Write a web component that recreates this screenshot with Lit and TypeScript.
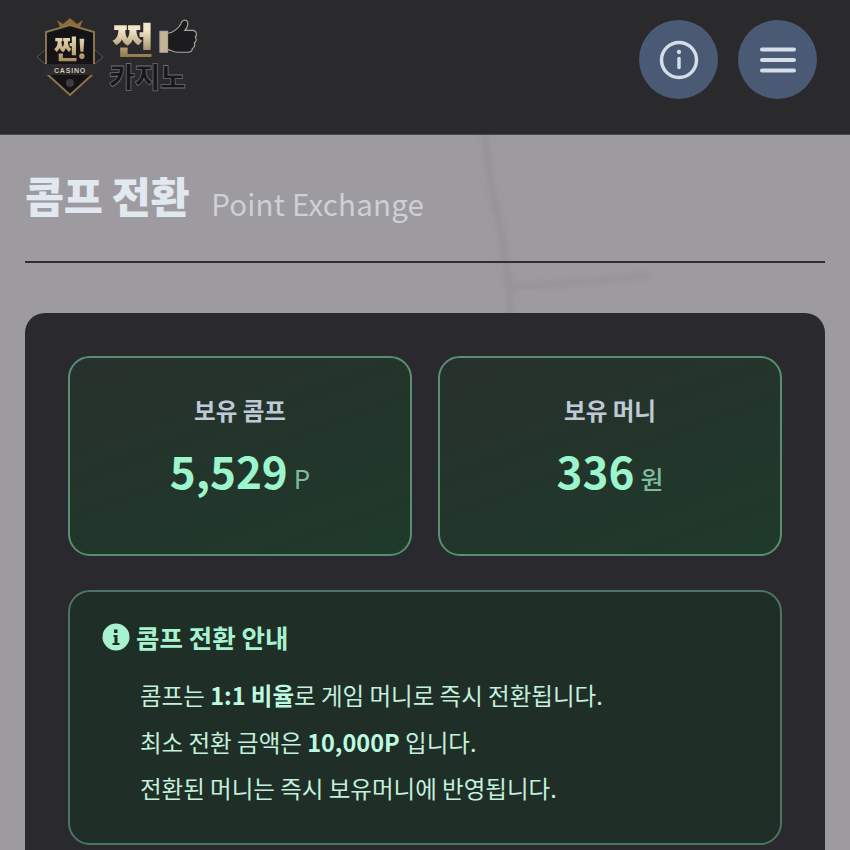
import { LitElement, html, css } from "lit";
import { customElement } from "lit/decorators.js";

@customElement("app-root")
export class AppRoot extends LitElement {
  static styles = css`
    :host { display: block; width: 850px; height: 850px; overflow: hidden; background: #9d9b9f; font-family: "Noto Sans CJK KR", "Noto Sans", sans-serif; }
    .header { height: 135px; box-sizing: border-box; background: #2a292b; border-bottom: 1px solid #4a494c; display: flex; justify-content: space-between; align-items: flex-start; padding: 20px 33px 0 36px; }
    .logo { display: flex; gap: 5px; margin-top: -3px; }
    .shield { position: relative; width: 68px; height: 80px; flex: none; }
    .shield svg { position: absolute; inset: 0; }
    .shield-t { position: absolute; left: 0; top: 16px; width: 68px; text-align: center; font-size: 26px; font-weight: 900; line-height: 30px; letter-spacing: -1px; background: linear-gradient(#f2e4c4, #a38658); -webkit-background-clip: text; background-clip: text; color: transparent; }
    .shield-c { position: absolute; left: 0; top: 50px; width: 68px; text-align: center; font: 700 7px/8px "Liberation Sans", sans-serif; letter-spacing: .8px; color: #cfc7b8; }
    .word { position: relative; width: 92px; height: 72px; margin-top: 3px; }
    .word svg { position: absolute; left: 50px; top: -2px; }
    .w1 { position: absolute; left: 3px; top: 1px; font-size: 38px; font-weight: 900; line-height: 36px; letter-spacing: -1px; transform: scaleX(1.2); transform-origin: left; background: linear-gradient(#f3e6c8 25%, #93764b); -webkit-background-clip: text; background-clip: text; color: transparent; }
    .w2 { position: absolute; left: 0; top: 43px; font-size: 28px; font-weight: 900; line-height: 26px; letter-spacing: -.2px; color: #17161a; -webkit-text-stroke: .8px #6d6c70; }
    .btns { display: flex; gap: 20px; }
    .btn { width: 79px; height: 79px; border-radius: 50%; background: #4a5a74; display: flex; align-items: center; justify-content: center; }
    .main { position: relative; padding: 0 25px; height: 715px; }
    .vein { position: absolute; left: 0; top: 0; }
    .title { position: relative; height: 128px; box-sizing: border-box; padding-top: 30px; display: flex; align-items: flex-start; gap: 22px; border-bottom: 2px solid #2f2e32; }
    h1 { margin: 0; font-size: 42.500px; line-height: 60px; font-weight: 900; color: #e2e8f0; letter-spacing: -.4px; }
    .sub { font-size: 29.500px; line-height: 60px; margin-top: 8px; color: #cdd0d6; font-weight: 400; letter-spacing: 0.2px; }
    .panel { position: relative; margin-top: 50px; background: #2a292d; border-radius: 20px; padding: 43px 43px 40px; }
    .cards { display: grid; grid-template-columns: 1fr 1fr; gap: 26px; }
    .card { height: 200px; box-sizing: border-box; border: 2px solid #568f72; border-radius: 22px; background: linear-gradient(160deg, #27302c, #1f3a2a); text-align: center; padding-top: 34px; }
    .lab { font-size: 23.500px; line-height: 36px; font-weight: 700; color: #c0cad6; }
    .val { margin-top: 12px; font-size: 44px; line-height: 60px; font-weight: 700; color: #9cf5cc; display: flex; justify-content: center; align-items: baseline; gap: 6px; }
    .unit { font-size: 26px; font-weight: 400; color: #7fbb9d; }
    .unit.kr { font-weight: 500; font-size: 25px; }
    .info { margin-top: 34px; height: 255px; box-sizing: border-box; border: 2px solid #4d7563; border-radius: 22px; background: #1f2e27; padding: 27px 32px; }
    .ih { display: flex; align-items: center; gap: 6px; font-size: 25.500px; line-height: 36px; font-weight: 700; color: #a7f3d0; }
    ul { list-style: none; margin: 17px 0 0; padding: 0 0 0 38px; font-size: 23.500px; line-height: 46.500px; color: #c3f1dc; }
    b { font-weight: 700; color: #bdfbe0; }
  `;

  render() {
    return html`
      <div class="header">
        <div class="logo">
          <div class="shield">
            <svg width="68" height="80" viewBox="0 0 68 80">
              <path d="M24 10l-3-7 6 4 7-6 7 6 6-4-3 7z" fill="#8f6a3a" />
              <path d="M10 32L1 40l9 8zM58 32l9 8-9 8z" fill="#232224" stroke="#57565a" />
              <path d="M34 8L58 15V56L34 78 10 56V15Z" fill="#141316" stroke="#8a7450" stroke-width="2" />
              <path d="M7 47H61V58H7Z" fill="#2c2b2d" />
              <circle cx="34" cy="66" r="4" fill="#3d3c3f" />
            </svg>
            <div class="shield-t">쩐!</div>
            <div class="shield-c">CASINO</div>
          </div>
          <div class="word">
            <svg width="40" height="40" viewBox="0 0 42 42" fill="#1c1b1d" stroke="#a9a7a3" stroke-width="1.200">
              <path d="M1 14h8v22H1z" fill="#c7b592" />
              <path d="M9 16c6 0 12-6 14-10 1-4 5-5 7-2 1 4-1 7-3 9h9c4 1 4 5 2 7 2 2 1 5-1 6 1 3 0 5-2 6 0 3-2 4-5 4H20c-4 0-7-2-11-3z" />
            </svg>
            <div class="w1">쩐</div>
            <div class="w2">카지노</div>
          </div>
        </div>
        <div class="btns">
          <div class="btn">
            <svg width="40" height="40" viewBox="0 0 40 40" fill="none" stroke="#d5dee8" stroke-width="3.500" stroke-linecap="round">
              <circle cx="20" cy="20" r="17.500" />
              <path d="M20 18.500v9" /><circle cx="20" cy="12" r="1.400" fill="#d5dee8" stroke-width="1.500" />
            </svg>
          </div>
          <div class="btn">
            <svg width="38" height="28" viewBox="0 0 38 28" stroke="#d5dee8" stroke-width="4" stroke-linecap="round">
              <path d="M3 3.500H35M3 14H35M3 24.500H35" />
            </svg>
          </div>
        </div>
      </div>
      <div class="main">
        <svg class="vein" width="850" height="715" viewBox="0 0 850 715" fill="none">
          <defs><filter id="b" x="-50%" y="-50%" width="200%" height="200%"><feGaussianBlur stdDeviation="3" /></filter></defs>
          <path d="M484 0C490 30 490 60 498 80C505 110 505 130 510 155C510 185 513 220 513 260" stroke="#8f8d92" stroke-width="4" filter="url(#b)" />
          <path d="M512 150C540 152 600 146 650 140" stroke="#949297" stroke-width="5" filter="url(#b)" />
        </svg>
        <div class="title"><h1>콤프 전환</h1><span class="sub">Point Exchange</span></div>
        <div class="panel">
          <div class="cards">
            <div class="card">
              <div class="lab">보유 콤프</div>
              <div class="val">5,529<span class="unit">P</span></div>
            </div>
            <div class="card">
              <div class="lab">보유 머니</div>
              <div class="val">336<span class="unit kr">원</span></div>
            </div>
          </div>
          <div class="info">
            <div class="ih">
              <svg width="28" height="28" viewBox="0 0 28 28">
                <circle cx="14" cy="14" r="13.500" fill="#a7f3d0" />
                <path d="M11.500 12h4v8h2v2h-7v-2h2v-6h-1zM12 6.500h3.500v3.500H12z" fill="#1f2e27" />
              </svg>
              콤프 전환 안내
            </div>
            <ul>
              <li>콤프는 <b>1:1 비율</b>로 게임 머니로 즉시 전환됩니다.</li>
              <li>최소 전환 금액은 <b>10,000P</b> 입니다.</li>
              <li>전환된 머니는 즉시 보유머니에 반영됩니다.</li>
            </ul>
          </div>
        </div>
      </div>
    `;
  }
}
